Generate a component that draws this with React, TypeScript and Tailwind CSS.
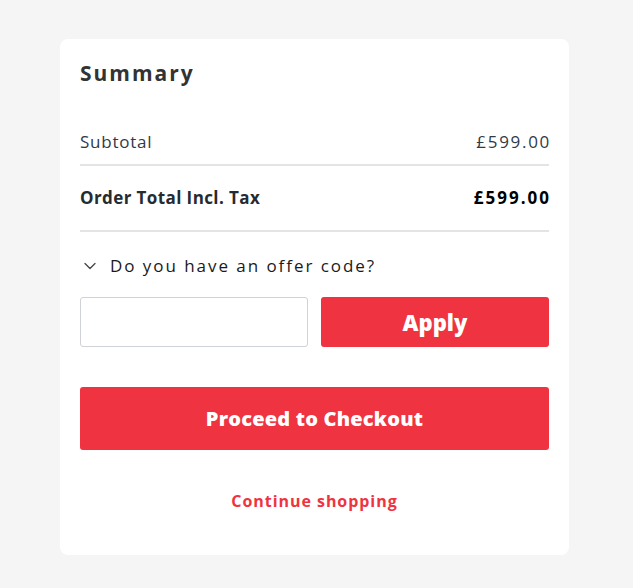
import { ChevronDown } from "lucide-react";

const FONT = { fontFamily: "'Open Sans', 'Noto Sans', Arial, sans-serif" };

export default function App() {
  return (
    <div className="min-h-[588px] bg-[#f5f5f5] pt-[39px]" style={FONT}>
      <div className="ml-[60px] w-[509px] rounded-lg bg-white px-5 pt-[22px] pb-[44px]">
        <h2 className="h-6 leading-6 text-[21px] font-bold tracking-[2px] text-[#333333]">Summary</h2>

        {/* Totals */}
        <div className="mt-[35px] flex h-11 items-center justify-between text-[17px] font-normal text-[#2f3a48]">
          <span className="tracking-[0.75px]">Subtotal</span>
          <span className="-mr-[2px] tracking-[1.7px]">£599.00</span>
        </div>
        <div className="h-[2px] bg-[#e4e4e4]" />
        <div className="flex h-16 items-center justify-between text-[17px] font-bold">
          <span className="tracking-[0.4px] text-[#262b31]">Order Total Incl. Tax</span>
          <span className="-mr-[2px] tracking-[2px] text-black">£599.00</span>
        </div>
        <div className="h-[2px] bg-[#e4e4e4]" />

        {/* Offer code */}
        <div className="mt-4 flex h-9 items-center gap-[10px] text-[17px] tracking-[1.95px] text-[#1a1a1a]">
          <ChevronDown size={20} strokeWidth={1.5} className="text-[#444]" />
          <span>Do you have an offer code?</span>
        </div>
        <div className="mt-[13px] grid grid-cols-2 gap-[13px]">
          <input className="h-[50px] rounded-[3px] border border-[#cfd2d6] px-3 outline-none" />
          <button className="h-[50px] rounded-[3px] bg-[#ef3340] text-[22px] font-extrabold text-white">Apply</button>
        </div>

        <button className="mt-10 h-[63px] w-full rounded-[3px] bg-[#ef3340] text-[20px] font-extrabold tracking-[0.2px] text-white">
          Proceed to Checkout
        </button>

        <div className="mt-[41px] h-5 text-center text-[16px] leading-5 font-bold tracking-[0.95px] text-[#ef3340]">
          Continue shopping
        </div>
      </div>
    </div>
  );
}
